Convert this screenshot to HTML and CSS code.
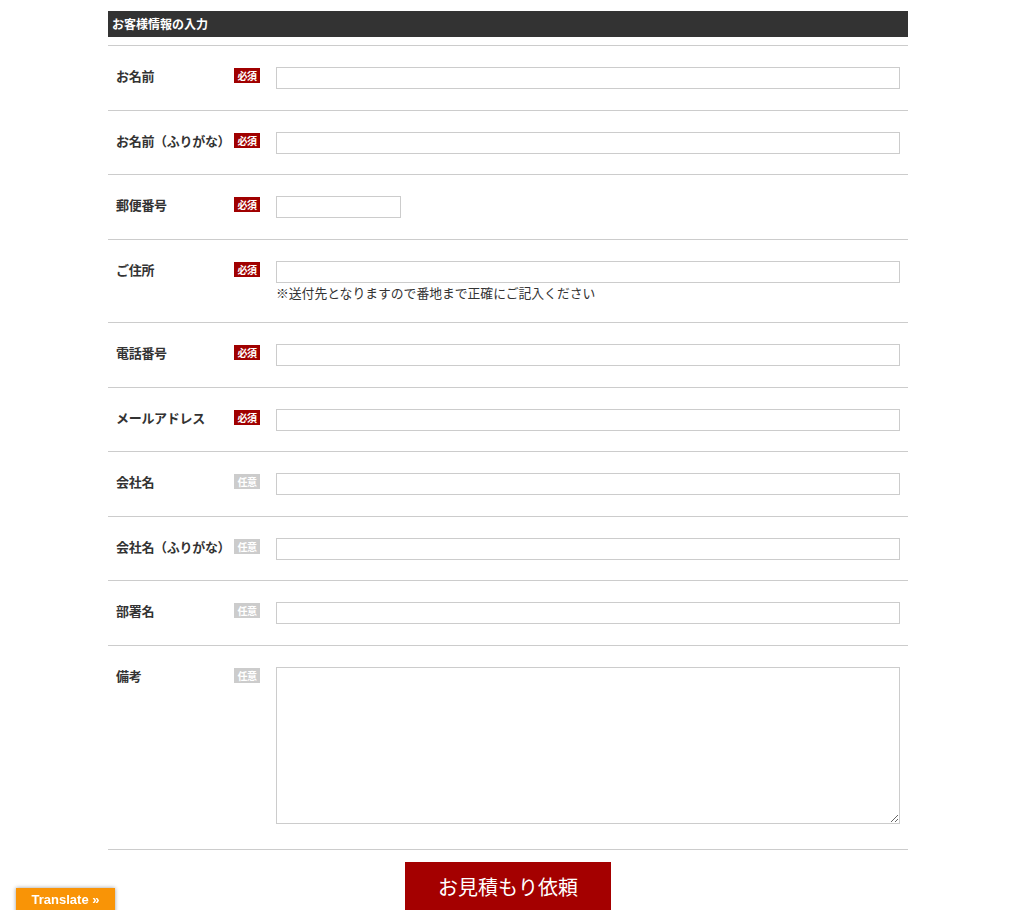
FILE: index.html
```html
<!DOCTYPE html>
<html lang="ja">
<head>
    <meta charset="UTF-8">
    <meta name="viewport" content="width=device-width, initial-scale=1.0">
    <title>お見積もり依頼</title>
    <link rel="stylesheet" href="styles.css">
</head>
<body>
    <div class="estimate">
        <h2 class="section-title">お客様情報の入力</h2>

        <form class="estimate-form">
            <div class="form-row">
                <label class="row-label" for="name">お名前</label>
                <span class="badge required">必須</span>
                <div class="row-field"><input type="text" id="name"></div>
            </div>

            <div class="form-row">
                <label class="row-label" for="kana">お名前（ふりがな）</label>
                <span class="badge required">必須</span>
                <div class="row-field"><input type="text" id="kana"></div>
            </div>

            <div class="form-row">
                <label class="row-label" for="zip">郵便番号</label>
                <span class="badge required">必須</span>
                <div class="row-field"><input type="text" id="zip" class="short"></div>
            </div>

            <div class="form-row">
                <label class="row-label" for="address">ご住所</label>
                <span class="badge required">必須</span>
                <div class="row-field">
                    <input type="text" id="address">
                    <p class="note">※送付先となりますので番地まで正確にご記入ください</p>
                </div>
            </div>

            <div class="form-row">
                <label class="row-label" for="tel">電話番号</label>
                <span class="badge required">必須</span>
                <div class="row-field"><input type="tel" id="tel"></div>
            </div>

            <div class="form-row">
                <label class="row-label" for="mail">メールアドレス</label>
                <span class="badge required">必須</span>
                <div class="row-field"><input type="email" id="mail"></div>
            </div>

            <div class="form-row">
                <label class="row-label" for="company">会社名</label>
                <span class="badge optional">任意</span>
                <div class="row-field"><input type="text" id="company"></div>
            </div>

            <div class="form-row">
                <label class="row-label" for="company-kana">会社名（ふりがな）</label>
                <span class="badge optional">任意</span>
                <div class="row-field"><input type="text" id="company-kana"></div>
            </div>

            <div class="form-row">
                <label class="row-label" for="dept">部署名</label>
                <span class="badge optional">任意</span>
                <div class="row-field"><input type="text" id="dept"></div>
            </div>

            <div class="form-row">
                <label class="row-label" for="memo">備考</label>
                <span class="badge optional">任意</span>
                <div class="row-field"><textarea id="memo"></textarea></div>
            </div>

            <div class="form-submit">
                <button type="submit">お見積もり依頼</button>
            </div>
        </form>
    </div>

    <a class="translate-btn" href="#">Translate »</a>
</body>
</html>
```

FILE: styles.css
```css
body {
    margin: 0;
    font-family: "Noto Sans CJK JP", "Noto Sans", sans-serif;
    color: #333;
    background-color: #fff;
}
.estimate {
    width: 800px;
    margin: 0 auto;
    padding-top: 11px;
}
.section-title {
    margin: 0 0 8px;
    height: 26px;
    padding-left: 4px;
    background-color: #333;
    color: #fff;
    font-size: 12px;
    font-weight: bold;
    line-height: 26px;
}
.form-row {
    display: flex;
    align-items: flex-start;
    border-top: 1px solid #ccc;
    padding: 21px 8px 20.5px;
}
.row-label {
    width: 118px;
    flex-shrink: 0;
    font-size: 13px;
    font-weight: bold;
    line-height: 18px;
    white-space: nowrap;
    letter-spacing: -0.3px;
}
.badge {
    width: 26px;
    height: 15px;
    margin-top: 1px;
    flex-shrink: 0;
    color: #fff;
    font-size: 10px;
    font-weight: bold;
    line-height: 15px;
    text-align: center;
    letter-spacing: -0.6px;
}
.badge.required {
    background-color: #a00000;
}
.badge.optional {
    background-color: #ccc;
}
.row-field {
    flex: 1;
    margin-left: 16px;
}
input, textarea {
    display: block;
    width: 100%;
    height: 22px;
    margin: 0;
    padding: 2px 4px;
    border: 1px solid #ccc;
    border-radius: 0;
    box-sizing: border-box;
    font-family: inherit;
    font-size: 13px;
}
input.short {
    width: 125px;
}
textarea {
    height: 157px;
    margin-bottom: 5px;
    resize: vertical;
}
.note {
    margin: 0;
    font-size: 12.8px;
    line-height: 19px;
}
.form-submit {
    border-top: 1px solid #ccc;
    padding-top: 12px;
    text-align: center;
}
.form-submit button {
    width: 206px;
    height: 48px;
    border: none;
    background-color: #a40000;
    color: #fff;
    font-family: inherit;
    font-size: 20px;
    cursor: pointer;
}
.form-submit button:hover {
    background-color: #8a0000;
}
.translate-btn {
    position: fixed;
    left: 16px;
    bottom: -4px;
    width: 99px;
    height: 26px;
    background-color: #f99406;
    box-shadow: 0 0 4px rgba(0,0,0,0.4);
    color: #fff;
    font-family: "Liberation Sans", Arial, sans-serif;
    font-size: 13px;
    font-weight: bold;
    line-height: 24px;
    text-align: center;
    text-decoration: none;
}
```
